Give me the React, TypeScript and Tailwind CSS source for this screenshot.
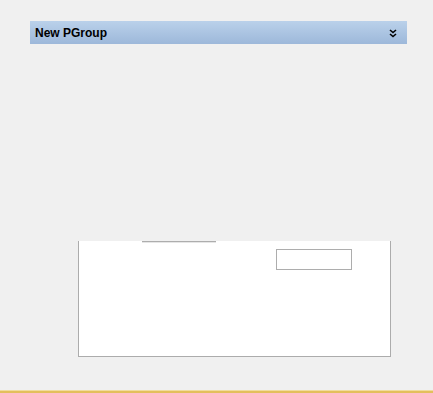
export default function App() {
  return (
    <div className="w-[433px] h-[393px] bg-[#f0f0f0] flex flex-col overflow-hidden" style={{ fontFamily: '"Liberation Sans", Arial, sans-serif' }}>
      {/* Group header */}
      <div className="mt-[21px] ml-[30px] w-[377px] h-[23px] bg-gradient-to-b from-[#bad1ea] to-[#9db8da] flex items-center pl-[5px] pr-[10px]">
        <span className="flex-1 text-[12px] font-bold text-black leading-none">New PGroup</span>
        <svg width="8" height="9" viewBox="0 0 8 9" className="mt-[1px]">
          <path d="M1 1 L4 3.5 L7 1 M1 5 L4 7.5 L7 5" stroke="#000" strokeWidth="1.6" fill="none" />
        </svg>
      </div>

      {/* Content panel */}
      <div className="mt-[197px] ml-[78px] w-[313px] h-[116px] bg-white border-x border-b border-[#acacac] flex items-start">
        <div className="ml-[63px] w-[74px] h-[2px] border-t border-[#adadad] border-b border-b-[#e6e6e6]" />
        <div className="ml-[60px] mt-[8px] w-[76px] h-[21px] border border-[#adadad] bg-white" />
      </div>

      <div className="flex-1" />
      <div className="h-[3px] border-t border-[#f1dc9e] bg-[#e3bf5c]" />
    </div>
  );
}
